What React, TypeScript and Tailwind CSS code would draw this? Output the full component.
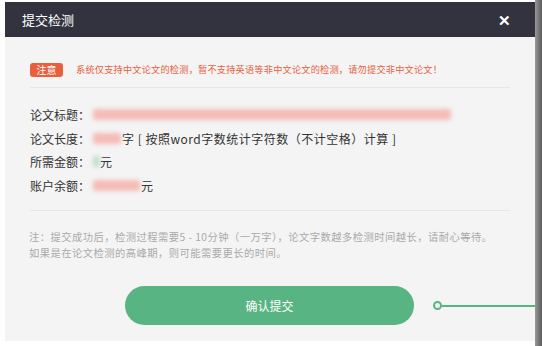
const font = { fontFamily: '"Noto Sans CJK SC", "Noto Sans", sans-serif' };

export default function App() {
    return <div className="w-[542px] h-[346px] bg-white flex overflow-hidden" style={font}>
        <div className="w-[5px]" />
        <div className="w-[530px] flex flex-col pt-[2px]">
            <div className="h-[35px] bg-[#32333f] flex items-center justify-between pl-[17px] pr-[24px]">
                <p className="text-white text-[13px]">提交检测</p>
                <span className="text-white text-[15px] font-bold leading-none">✕</span>
            </div>
            <div className="h-[304px] bg-[#f4f4f4] flex flex-col pt-[26px]">
                <div className="mx-[25px] flex items-center pb-[10px] border-b border-[#e6e6e6]">
                    <span className="bg-[#e8603c] text-white text-[10px] rounded-[3px] w-[33px] h-[14px] flex items-center justify-center leading-none">注意</span>
                    <span className="ml-[13px] text-[#e8603c] text-[9.2px] tracking-[0.2px] whitespace-nowrap">系统仅支持中文论文的检测，暂不支持英语等非中文论文的检测，请勿提交非中文论文！</span>
                </div>
                <div className="mx-[25px] pt-[17px] pb-[15px] border-b border-[#e6e6e6] flex flex-col gap-[4px] text-[12px] text-[#333] leading-[19.5px]">
                    <InfoRow label="论文标题">
                        <Blurred className="w-[358px]" />
                    </InfoRow>
                    <InfoRow label="论文长度">
                        <Blurred className="w-[28px]" />
                        <span className="ml-[1px] tracking-[0.5px] whitespace-nowrap">字 [ 按照word字数统计字符数（不计空格）计算 ]</span>
                    </InfoRow>
                    <InfoRow label="所需金额">
                        <Blurred className="w-[7px]" green />
                        <span>元</span>
                    </InfoRow>
                    <InfoRow label="账户余额">
                        <Blurred className="w-[47px]" />
                        <span className="ml-[1px]">元</span>
                    </InfoRow>
                </div>
                <div className="mx-[24px] pt-[18px] text-[10.3px] tracking-[0.45px] text-[#aaaaaa] leading-[16px]">
                    <p className="whitespace-nowrap">注：提交成功后，检测过程需要5 - 10分钟（一万字），论文字数越多检测时间越长，请耐心等待。</p>
                    <p>如果是在论文检测的高峰期，则可能需要更长的时间。</p>
                </div>
                <div className="flex items-center mt-[25px]">
                    <button className="ml-[120px] w-[289px] h-[39px] rounded-full bg-[#58b482] text-white text-[12px]">确认提交</button>
                    <span className="ml-[19px] w-[9px] h-[9px] rounded-full border-2 border-[#58b482]" />
                    <span className="flex-1 h-[2px] bg-[#58b482]" />
                </div>
            </div>
        </div>
        <div className="w-[7px] bg-gradient-to-r from-[#9a9a9a] to-[#5c5c5c]" />
    </div>
}

function InfoRow({ label, children }: { label: string, children: React.ReactNode }) {
    return <div className="flex items-center">
        <span className="w-[63px] whitespace-nowrap">{label}：</span>
        {children}
    </div>
}

function Blurred({ className, green }: { className: string, green?: boolean }) {
    return <span className={"h-[11px] rounded-[2px] blur-[2px] " + className + (green ? " bg-[#bfe0cc]" : " bg-[#f5bcb6]")} />
}
